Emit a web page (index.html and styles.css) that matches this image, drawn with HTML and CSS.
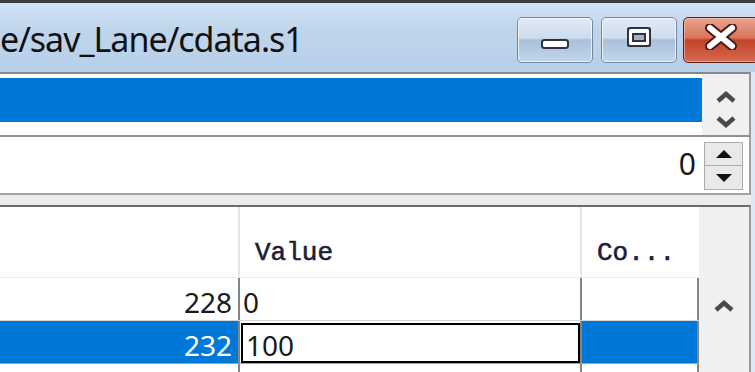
FILE: index.html
```html
<!DOCTYPE html>
<html lang="en">
<head>
  <meta charset="UTF-8">
  <meta name="viewport" content="width=device-width, initial-scale=1.0">
  <title>cdata.s1</title>
  <link rel="stylesheet" href="styles.css">
</head>
<body>
  <div class="window">

    <!-- Title bar -->
    <header class="titlebar">
      <div class="title">e/sav_Lane/cdata.s1</div>
      <div class="caption-buttons">
        <div class="cap-btn minimize">
          <svg width="28" height="10" viewBox="0 0 28 10"><rect x="1" y="1" width="26" height="8" rx="2.5" fill="#fff" stroke="#2e333d" stroke-width="2"/></svg>
        </div>
        <div class="cap-btn maximize">
          <svg width="24" height="20" viewBox="0 0 24 20">
            <rect x="0" y="0" width="24" height="20" rx="2.5" fill="#2e333d"/>
            <rect x="2" y="2" width="20" height="16" rx="1.5" fill="#fff"/>
            <rect x="5" y="6" width="14" height="9" fill="#2e333d"/>
            <rect x="7" y="8" width="10" height="5" fill="#9fb2c9"/>
          </svg>
        </div>
        <div class="cap-btn close">
          <svg width="34" height="26" viewBox="0 0 34 26">
            <path d="M6 4 L28 22 M28 4 L6 22" stroke="#4a1a12" stroke-width="10" stroke-linecap="round"/>
            <path d="M6 4 L28 22 M28 4 L6 22" stroke="#fff" stroke-width="6" stroke-linecap="round"/>
          </svg>
        </div>
      </div>
    </header>

    <div class="client">

      <!-- List box -->
      <div class="listbox">
        <div class="list-items">
          <div class="list-item selected"></div>
        </div>
        <div class="list-scroll">
          <svg width="22" height="12" viewBox="0 0 22 12"><polyline points="3,10 11,3 19,10" fill="none" stroke="#4a4a4a" stroke-width="4.5"/></svg>
          <svg width="22" height="12" viewBox="0 0 22 12"><polyline points="3,2 11,9 19,2" fill="none" stroke="#4a4a4a" stroke-width="4.5"/></svg>
        </div>
      </div>

      <!-- Spin edit -->
      <div class="spin-edit">
        <span class="spin-value">0</span>
        <div class="spin-buttons">
          <div class="spin-btn">
            <svg width="16" height="8" viewBox="0 0 16 8"><polygon points="0,8 8,0 16,8" fill="#111"/></svg>
          </div>
          <div class="spin-btn">
            <svg width="16" height="8" viewBox="0 0 16 8"><polygon points="0,0 16,0 8,8" fill="#111"/></svg>
          </div>
        </div>
      </div>

      <div class="gap"></div>

      <!-- Grid -->
      <div class="grid">
        <div class="grid-table">
          <div class="grid-row header">
            <div class="cell c-index"></div>
            <div class="cell c-value">Value</div>
            <div class="cell c-comment">Co...</div>
          </div>
          <div class="grid-row">
            <div class="cell c-index">228</div>
            <div class="cell c-value">0</div>
            <div class="cell c-comment"></div>
          </div>
          <div class="grid-row selected">
            <div class="cell c-index">232</div>
            <div class="cell c-value"><div class="cell-editor">100</div></div>
            <div class="cell c-comment"></div>
          </div>
          <div class="grid-row">
            <div class="cell c-index"></div>
            <div class="cell c-value"></div>
            <div class="cell c-comment"></div>
          </div>
        </div>
        <div class="grid-scroll">
          <svg width="22" height="12" viewBox="0 0 22 12"><polyline points="3,10 11,3 19,10" fill="none" stroke="#4a4a4a" stroke-width="4.5"/></svg>
        </div>
      </div>

    </div>
  </div>
</body>
</html>
```

FILE: styles.css
```css
/* Page */
body {
  margin: 0;
  padding: 0;
  width: 755px;
  height: 372px;
  overflow: hidden;
  font-family: "Noto Sans", "Open Sans", sans-serif;
  background-color: #dde8f4; /* window frame */
}

.window {
  display: flex;
  flex-direction: column;
  height: 372px;
}

/* Title bar */
.titlebar {
  flex-shrink: 0;
  display: flex;
  justify-content: space-between;
  align-items: flex-start;
  height: 69px;
  border-top: 3px solid #3a3d42;
  background: linear-gradient(#d2e2f3, #bfd5ec 40%, #b7cfe8);
  overflow: hidden;
}

.title {
  margin-top: 19px;
  font-size: 34px;
  line-height: 34px;
  letter-spacing: -1px;
  color: #111111;
  white-space: nowrap;
}

.caption-buttons {
  display: flex;
  margin-top: 14px;
  margin-right: -4px;
}

.cap-btn {
  width: 74px;
  height: 44px;
  box-sizing: content-box;
  display: flex;
  align-items: center;
  justify-content: center;
  border: 1px solid #74869e;
  border-radius: 5px;
  box-shadow: inset 0 0 0 1px rgba(255, 255, 255, 0.7);
  background: linear-gradient(#dfeaf6, #cddcee 45%, #a9c0db 50%, #c3d6eb);
}

.cap-btn.minimize {
  padding-top: 7px;
  height: 37px;
}

.cap-btn.maximize {
  padding-bottom: 6px;
  height: 38px;
  margin-left: 8px;
}

.cap-btn.close {
  padding-bottom: 6px;
  height: 38px;
  margin-left: 6px;
  border-color: #5b1d14;
  background: linear-gradient(#e9a390, #d8765c 45%, #c4432a 50%, #d36a4e);
  box-shadow: inset 0 0 0 1px rgba(255, 200, 180, 0.6);
}

/* Client area */
.client {
  flex: 1;
  min-height: 0;
  display: flex;
  flex-direction: column;
  margin-right: 4px;
  background-color: #ececec;
}

/* List box */
.listbox {
  flex-shrink: 0;
  display: flex;
  height: 61px;
  border-top: 2px solid #8a8a8a;
  border-bottom: 2px solid #8f8f8f;
  border-right: 2px solid #9a9a9a;
  background-color: #ffffff;
}

.list-items {
  flex: 1;
  padding-top: 4px;
}

.list-item {
  height: 44px;
}

.list-item.selected {
  background-color: #0078d7;
}

.list-scroll {
  width: 47px;
  display: flex;
  flex-direction: column;
  align-items: center;
  gap: 13px;
  padding-top: 17px;
  background-color: #f0f0f0;
}

/* Spin edit */
.spin-edit {
  flex-shrink: 0;
  display: flex;
  justify-content: flex-end;
  align-items: flex-start;
  height: 56px;
  padding-right: 6px;
  border-bottom: 2px solid #a3a3a3;
  border-right: 2px solid #a3a3a3;
  background-color: #ffffff;
}

.spin-value {
  margin-top: 10px;
  margin-right: 8px;
  font-size: 30px;
  line-height: 34px;
  color: #1a1a1a;
}

.spin-buttons {
  margin-top: 5px;
  display: flex;
  flex-direction: column;
}

.spin-btn {
  width: 37px;
  height: 22px;
  display: flex;
  align-items: center;
  justify-content: center;
  border: 1px solid #adadad;
  background-color: #e9e9e9;
}

.spin-btn + .spin-btn {
  border-top: none;
  height: 23px;
}

.gap {
  flex-shrink: 0;
  height: 10px;
  background-color: #ececec;
}

/* Grid */
.grid {
  flex: 1;
  min-height: 0;
  display: flex;
  overflow: hidden;
  border-top: 2px solid #6b6b6b;
  border-right: 2px solid #9a9a9a;
  background-color: #ffffff;
}

.grid-table {
  display: flex;
  flex-direction: column;
}

.grid-row {
  flex-shrink: 0;
  display: flex;
  height: 42px;
  border-bottom: 1px solid #d4d4d4;
}

.grid-row.header {
  height: 70px;
  border-bottom: 1px solid #ececec;
}

.cell {
  display: flex;
  align-items: center;
  padding-top: 5px;
  box-sizing: border-box;
  font-size: 28px;
  color: #1a1a1a;
  border-right: 2px solid #858585;
}

.c-index {
  width: 240px;
  justify-content: flex-end;
  padding-right: 6px;
}

.c-value {
  width: 342px;
  padding-left: 3px;
}

.c-comment {
  width: 117px;
}

.header .cell {
  padding-top: 22px;
  font-family: "Liberation Mono", "Courier New", monospace;
  font-size: 26px;
  color: #1d1d3a;
  -webkit-text-stroke: 0.6px #1d1d3a;
  border-right: 2px solid #e6e6e6;
}

.header .c-value {
  padding-left: 15px;
}

.header .c-comment {
  padding-left: 15px;
  border-right: none;
}

.grid-row.selected {
  border-bottom-color: #a0a0a0;
}

.grid-row.selected .c-index,
.grid-row.selected .c-comment {
  background-color: #0078d7;
  color: #ffffff;
}

.grid-row.selected .c-value {
  padding: 2px 0 0 1px;
}

.cell-editor {
  flex: 1;
  height: 100%;
  display: flex;
  align-items: center;
  padding-top: 3px;
  padding-left: 3px;
  box-sizing: border-box;
  border: 2px solid #000000;
  background-color: #ffffff;
}

.grid-scroll {
  flex: 1;
  display: flex;
  justify-content: center;
  align-items: flex-start;
  padding-top: 93px;
  background-color: #f0f0f0;
}
```
